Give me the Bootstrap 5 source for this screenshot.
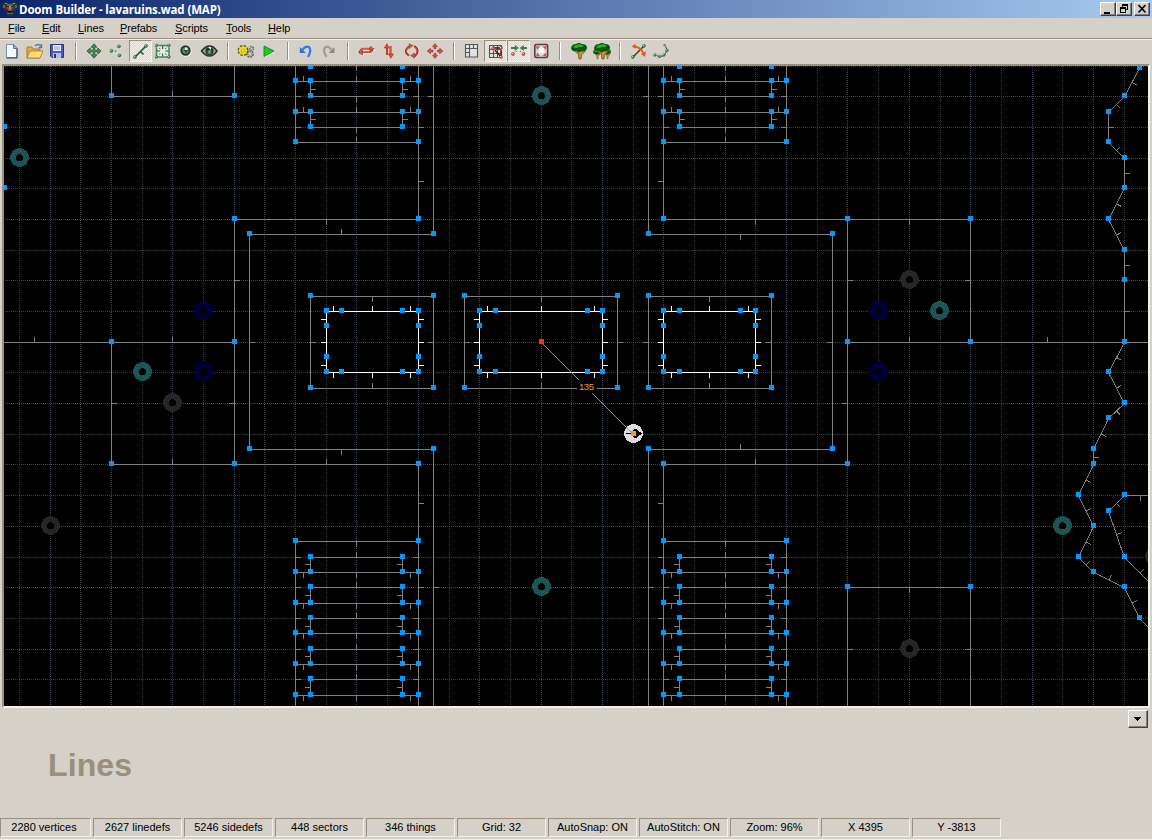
<!DOCTYPE html>
<html lang="en">
<head>
<meta charset="utf-8">
<title>Doom Builder - lavaruins.wad (MAP)</title>
<meta name="viewport" content="width=device-width, initial-scale=1">
<link href="https://cdn.jsdelivr.net/npm/bootstrap@5.3.0/dist/css/bootstrap.min.css" rel="stylesheet">
<style>
:root{--face:#d5d0c8;--shade:#988f7c;--lite:#f3f1ea}
body{width:1152px;height:840px;overflow:hidden;background:var(--face);color:#000;font:11px/14px "Liberation Sans",Arial,sans-serif;cursor:default}
svg{display:block;flex:none}
.titlebar{height:18px;background:linear-gradient(90deg,#0a246a,#a6caf0);color:#fff;font:bold 12px/17px "Open Sans","Noto Sans",sans-serif;padding:0 2px}
.caption{letter-spacing:-.13px;font-size:11.5px;margin-left:1px}
.capbtn{width:16px;height:14px;background:var(--face);border:1px solid;border-color:#fff #404040 #404040 #fff;box-shadow:inset -1px -1px #808080}
.capbtn.close-box{margin-left:2px}
.menubar{height:22px;padding:3px 0 0 8px;border-bottom:1px solid var(--lite);box-shadow:inset 0 -1px var(--shade);letter-spacing:-.1px}
.menubar span{display:inline-block;height:14px;white-space:nowrap}
.menubar u{text-underline-offset:1px}
.toolbar{height:24px}
.tool{width:23px;height:22px;padding:3px 0 0 4px;flex:none}
.tool.pressed{border:1px solid;border-color:var(--shade) var(--lite) var(--lite) var(--shade);padding:2px 0 0 3px;background:repeating-conic-gradient(#f1eee8 0 25%,#dcd8d0 0 50%) 0 0/2px 2px}
.gap{width:14px;flex:none;height:18px;margin-top:2px;background:linear-gradient(90deg,transparent 6px,var(--shade) 6px 7px,#fff 7px 8px,transparent 8px)}
.view{height:644px;border:2px solid;border-color:var(--shade) var(--lite) var(--lite) var(--shade);margin:0 2px;box-shadow:inset 1px 1px #404040}
.viewport{width:1144px;height:640px;background:#000}
.details{height:110px}
.mode{font:bold 32px/32px "Liberation Sans",Arial,sans-serif;color:var(--shade);padding:41px 0 0 48px;letter-spacing:.1px}
.drop{width:20px;height:18px;margin:2px 4px 0 0;border:1px solid;border-color:#fff #404040 #404040 #fff;box-shadow:inset -1px -1px #808080}
.status{height:22px;gap:2px;border-bottom:1px solid var(--lite);padding-bottom:2px}
.pane{width:89px;height:19px;flex:none;border:1px solid;border-color:var(--shade) var(--lite) var(--lite) var(--shade);line-height:16px;text-align:center;white-space:nowrap}
.pane:first-child{width:91px;padding-right:3px}
</style>
</head>
<body>
<div class="d-flex flex-column">
<header class="titlebar d-flex align-items-center">
 <svg width="16" height="16" viewBox="0 0 16 16"><path d="M1 2l3-1 2 1h4l2-1 3 1 1 3-2 4-2 1-1 4-2 1H7l-2-1-1-4-2-1-2-4z" fill="#26352d"/><path d="M1 4h2v3H1zM13 4h2v3h-2zM5 3h6v2H5zM6 8h4v2H6zM5 12h6v1H5z" fill="#55685c"/><path d="M3 2h2v1H3zM11 2h2v1h-2zM7 5h2v3H7z" fill="#8a9a8c"/><path d="M4 6h3v2H4zM9 6h3v2H9z" fill="#c81c1c"/><path d="M6 10h4v1H6z" fill="#000"/></svg>
 <span class="caption text-nowrap">Doom Builder - lavaruins.wad (MAP)</span>
 <div class="ms-auto d-flex">
  <div class="capbtn"><svg width="14" height="12"><path d="M3 9h6v2H3z"/></svg></div>
  <div class="capbtn"><svg width="14" height="12" shape-rendering="crispEdges"><path d="M5 1h6v2H5zM5 3h1v1H5zM10 3h1v4h-1zM8 6h2v1H8zM3 4h6v2H3zM3 6h1v4H3zM8 6h1v4H8zM3 9h6v1H3z"/></svg></div>
  <div class="capbtn close-box"><svg width="14" height="12"><path d="M3.500 2l7 7.500M10.500 2l-7 7.500" stroke="#000" stroke-width="1.700"/></svg></div>
 </div>
</header>
<nav class="menubar d-flex">
 <span style="width:34px"><u>F</u>ile</span><span style="width:36px"><u>E</u>dit</span><span style="width:42px"><u>L</u>ines</span><span style="width:55px"><u>P</u>refabs</span><span style="width:51px"><u>S</u>cripts</span><span style="width:42px"><u>T</u>ools</span><span><u>H</u>elp</span>
</nav>
<div class="toolbar d-flex" id="toolbar"></div>
<main class="view"><svg class="viewport" id="map" viewBox="4 66 1144 640" shape-rendering="crispEdges"></svg></main>
<section class="details d-flex justify-content-between align-items-start">
 <div class="mode">Lines</div>
 <div class="drop"><svg width="18" height="16" shape-rendering="crispEdges"><path d="M5 6h7v1H5zM6 7h5v1H6zM7 8h3v1H7zM8 9h1v1H8z"/></svg></div>
</section>
<footer class="status d-flex">
 <div class="pane">2280 vertices</div><div class="pane">2627 linedefs</div><div class="pane">5246 sidedefs</div><div class="pane">448 sectors</div><div class="pane">346 things</div><div class="pane">Grid: 32</div><div class="pane">AutoSnap: ON</div><div class="pane">AutoStitch: ON</div><div class="pane">Zoom: 96%</div><div class="pane">X 4395</div><div class="pane">Y -3813</div>
</footer>
</div>
<script src="https://cdn.jsdelivr.net/npm/bootstrap@5.3.0/dist/js/bootstrap.bundle.min.js"></script>
<script>
// ---------- toolbar icons, each on a 16 x 16 grid ----------
const ball=(x,y,c,r=1.7)=>`<circle cx="${x+.7}" cy="${y+.7}" r="${r}" fill="#fff9"/><circle cx="${x}" cy="${y}" r="${r}" fill="${c}" stroke="#0005" stroke-width=".6"/><circle cx="${x-.5}" cy="${y-.6}" r=".7" fill="#fff9"/>`;
const G='#3f8a4c',D='#24522e',R='#e0523c',K='#7c1d12';
const tree='<path d="M7 8l1 8h2l.500-4 4-4z" fill="#c79030" stroke="#6b4312" stroke-width=".7"/><path d="M7.500 11L4 8" stroke="#a87424" stroke-width="1.600"/><path d="M0 5q1-4 5-4 3-2 6 0 5 0 5 4-1 4-5 3-3 2-6 0-4 1-5-3z" fill="#07580c"/><path d="M2 4q2-2.500 5-2.500 3-1 6 1.500-2 2-5 1-3 2-6 0z" fill="#2cb02c"/>';
const icons={
 new:'<path d="M2.500 1.500h7l3.500 4v9H2.500z" fill="#f4f8ff" stroke="#7d92a8"/><path d="M9.500 1.500v4H13z" fill="#b8cbe4" stroke="#5b7186"/><path d="M13 5.500v9.500H2.500" stroke="#1e3c66" fill="none"/>',
 open:'<path d="M0 4h5l1 2h7v9H0z" fill="#e8ac34" stroke="#a06c14" stroke-width=".8"/><path d="M3 8h13l-3 7H0z" fill="#ffdc84" stroke="#b37c1c" stroke-width=".8"/><path d="M8 3q3-3 6 0M14.500 1v3.500h-3" fill="none" stroke="#587898" stroke-width="1.400"/>',
 save:'<path d="M.5 1.500h13v13H2l-1.500-1.500z" fill="#4c5cc0" stroke="#28347c"/><path d="M3 2h8v6H3z" fill="#e8f0ff"/><path d="M4 4h6M4 6h6" stroke="#8ca0d8"/><path d="M3 10h8v5H3z" fill="#b8c0d8"/><path d="M4 11h2v4H4z" fill="#28347c"/>',
 move:`<path d="M7 3v10M2 8h10" stroke="${D}" stroke-width="2.400"/><path d="M7 .8l3 3.400H4zM7 15.200l3-3.400H4zM-.2 8l3.400-3v6zM14.200 8l-3.400-3v6z" fill="${G}" stroke="${D}" stroke-width=".7"/><path d="M7 3v10M2 8h10" stroke="#6cae74" stroke-width=".8"/>`,
 verts:ball(1.500,8,G)+ball(9,3.500,G)+ball(9.500,12.500,G)+ball(5.500,8,G,.8),
 line:`<path d="M2 14L13 3M7.500 8.500l3 3" stroke="${D}" stroke-width="1.600"/>`+ball(2,14,G)+ball(13,3,G),
 sector:`<path d="M.5 2.500h12.500v11.500H.5z" fill="#e4e8de" stroke="${G}" stroke-width="1.500"/><path d="M6.700 3v3M6.700 13.500v-3M1 8h3M12.500 8h-3" stroke="${D}"/><path d="M3 5l1.500 1M10.500 5L9 6M3 11.500l1.500-1M10.500 11.500l-1.500-1" stroke="${G}"/>`+ball(.5,2.500,G,1.500)+ball(13,2.500,G,1.500)+ball(.5,14,G,1.500)+ball(13,14,G,1.500),
 thing:`<circle cx="6.800" cy="8" r="6" fill="#eceee8"/><circle cx="6.500" cy="7.500" r="4.200" fill="#5d9467" stroke="#22362a" stroke-width="2"/><path d="M6 8V4.500h2.500V8z" fill="#e6efe6"/><path d="M4.500 7h5l-2.500 3z" fill="${D}"/>`,
 eye:'<path d="M-.5 8q4-5 8-5t7.500 5q-3.500 5-7.500 5T-.5 8z" fill="#9aa69c" stroke="#27302a" stroke-width="1.500"/><circle cx="7.500" cy="8" r="4" fill="#20392a"/><circle cx="7.500" cy="9" r="2" fill="#54a060"/><path d="M6 4h3v3z" fill="#e8f4e8"/>',
 gears:'<circle cx="11" cy="11" r="2.500" fill="none" stroke="#555" stroke-width="2.600" stroke-dasharray="1.500 .7"/><circle cx="11" cy="11" r="2" fill="none" stroke="#bbb"/><circle cx="12.500" cy="5.500" r="1.800" fill="none" stroke="#777" stroke-width="2" stroke-dasharray="1.400 .7"/><circle cx="4" cy="7.500" r="3.500" fill="none" stroke="#5e5200" stroke-width="4" stroke-dasharray="1.800 .95"/><circle cx="4" cy="7.500" r="3" fill="none" stroke="#ecd80c" stroke-width="2.400"/>',
 play:'<path d="M3 4v10.500L13 9z" fill="#fff9"/><path d="M2 3v10.500L12 8z" fill="#1ec81e" stroke="#0a7a10" stroke-width=".8"/>',
 undo:'<path d="M.8 4v6h6z" fill="#2f70d8"/><path d="M3 7.500q3.500-5 7-3.500 3 3-1 10" fill="none" stroke="#3a7ae0" stroke-width="2.300"/>',
 redo:'<path d="M12.500 4v6h-6z" fill="#8e8a82"/><path d="M10 7.500Q6.500 2 3 4.500q-2.500 3 1.500 9.500" fill="none" stroke="#a09c94" stroke-width="2.300"/>',
 fliph:`<path d="M2 6.300h9V4l4 3-4 2.500M12 10H4v2L-.5 9 4 6.500" fill="none" stroke="#fff9" stroke-width="2"/><path d="M2 6h9M3 9.500h9M2 6L0 9M14 7l-2 2.500" stroke="${K}" stroke-width="1"/><path d="M2 5.500h9M3 9h9" stroke="${R}" stroke-width="1.300"/><path d="M11 3.200L15.200 6 11 8.500zM3.500 7L-.8 9.500l4.300 2.500z" fill="${R}" stroke="${K}" stroke-width=".5"/>`,
 flipv:`<path d="M5 3v9M8.500 3v9" stroke="${K}" stroke-width="1.800"/><path d="M5 3v9M8.500 3v9" stroke="${R}" stroke-width="1.100"/><path d="M2.200 5L5 .8 7 5zM6.500 11l2.300 4.200L11.500 11z" fill="${R}" stroke="${K}" stroke-width=".5"/>`,
 rotate:`<path d="M5 3Q-.500 6 1.500 10.500L4 12.500M9 3q5 3 3 7.500l-2.500 3" fill="none" stroke="${K}" stroke-width="1.900"/><path d="M4.500 3.500Q0 6 2 10.500L4 12M9 3.500q4.500 3 2.500 7L9.500 13" fill="none" stroke="${R}" stroke-width="1.100"/><path d="M4 .8v5L8 2.500zM9.500 10v5.200L5.500 12.500z" fill="${R}" stroke="${K}" stroke-width=".4"/>`,
 scale:`<path d="M7 .6l2.500 3H8v2H6v-2H4.500zM7 15.400l2.500-3H8v-2H6v2H4.500zM-.8 8l3.300-2.700V7H5v2H2.500v1.700zM15 8l-3.300-2.700V7H9.500v2h2.200v1.700z" fill="${R}" stroke="${K}" stroke-width=".5"/>`,
 grid:'<path d="M.5 1.500h12v12.500H.5z" fill="#dfe1e3"/><path d="M.5 1.500h12v12.500H.5zM4.500 1.500v12.500M8.500 1.500v4M.5 5.500h12M.5 9.500h4" fill="none" stroke="#53575c" stroke-width="1.100"/>',
 snap:`<path d="M1.500 2.500h12v12h-12zM5.500 2.500v12M9.500 2.500v12M1.500 6.500h12M1.500 10.500h12" fill="none" stroke="#53575c" stroke-width="1.100"/><path d="M5 5h8v9M5 5l8 9" fill="none" stroke="#3a1a16" stroke-width="1.300"/>${ball(5,5.500,R)+ball(13,5,R)+ball(13,14,R)}`,
 stitch:`<path d="M0 5h5M16 5h-5" stroke="${D}" stroke-width="1.300"/><path d="M4 2.500L7.500 5 4 7.500zM12.500 2.500L9 5l3.500 2.500z" fill="${G}" stroke="${D}" stroke-width=".4"/>`+ball(2,11,R)+ball(12.500,11,R)+ball(5,8.500,R,.6)+ball(9.500,8.500,R,.6),
 snapx:`<rect x=".8" y="1.500" width="12.800" height="13" rx="1.500" fill="#dcdcdc" stroke="#44474b" stroke-width="1.600"/><path d="M5 5l4.500 5M9.500 5L5 10" stroke="#fff" stroke-width="2"/><path d="M2 3l4 .5L3 7zM12.500 3l-4 .5L12 7zM2 13.500l4-.5L3 9.500zM12.500 13.500l-4-.5L12 9.500z" fill="${R}"/>`,
 tree:tree,
 trees:`<g transform="translate(-1 6) scale(.5 .62)">${tree}</g><g transform="translate(9 6) scale(.5 .62)">${tree}</g>${tree}`,
 curve:`<path d="M2 14L13 3" stroke="${D}" stroke-width="1.600"/><path d="M4 3.500q6 1 8.500 7" fill="none" stroke="#e8571e" stroke-width="1.800"/><path d="M4.500 .8v5L.8 3.500zM15 8.500l-1 5.500-4-3z" fill="#e8571e"/>`+ball(2,14,G)+ball(13,3,G),
 arc:`<path d="M1 12q5 3 8 1t4-6l-2-5" fill="none" stroke="${D}" stroke-width="1"/>`+ball(1,12,G,1.500)+ball(5.500,13.500,G,1.500)+ball(10,12,G,1.500)+ball(13,7.500,G,1.500)+ball(10.500,2,G,1.100)
};
const order='new open save | move verts *line sector thing eye | gears play | undo redo | fliph flipv rotate scale | grid *snap *stitch snapx | tree trees | curve arc';
document.getElementById('toolbar').innerHTML=order.split(' ').map(n=>{
 if(n==='|')return '<div class="gap"></div>';
 const on=n[0]==='*';
 return `<div class="tool${on?' pressed':''}"><svg width="16" height="16" overflow="visible" viewBox="0 0 16 16">${icons[on?n.slice(1):n]}</svg></div>`;
}).join('');

// ---------- map ----------
const out=[];
const gx=i=>Math.floor(19.35+30.69*i), gy=j=>Math.floor(66.02+30.69*j);
const tone=k=>k%2?'#3c4859':'#404040';
for(let i=0;i<37;i++)out.push(`<path d="M${gx(i)+.5} 66V706" stroke="${tone(i)}" stroke-dasharray="1 1"/>`);
for(let j=0;j<21;j++)out.push(`<path d="M5 ${gy(j)+.5}H1148" stroke="${tone(j)}" stroke-dasharray="1 1"/>`);

const grey='#808080';
// tick leaving a wall point in direction n/s/e/w
function tick(x,y,d,c=grey){
 const r={n:[x,y-5,1,5],s:[x,y+1,1,5],e:[x+1,y,5,1],w:[x-5,y,5,1]}[d];
 out.push(`<rect x="${r[0]}" y="${r[1]}" width="${r[2]}" height="${r[3]}" fill="${c}"/>`);
}
function ticks(str,c){str.split(' ').forEach(t=>{const [x,y,d]=t.split(',');tick(+x,+y,d,c)})}
function H(y,x1,x2,c=grey){out.push(`<rect x="${x1}" y="${y}" width="${x2-x1+1}" height="1" fill="${c}"/>`)}
function V(x,y1,y2,c=grey){out.push(`<rect x="${x}" y="${y1}" width="1" height="${y2-y1+1}" fill="${c}"/>`)}
function box(x1,y1,x2,y2,c){H(y1,x1,x2,c);H(y2,x1,x2,c);V(x1,y1,y2,c);V(x2,y1,y2,c)}
const pts=[];
const P=(x,y)=>pts.push([x,y]);

// outer rooms
H(96,111,234);V(111,66,96);V(234,66,96);H(342,4,234);V(111,342,464);H(464,111,418);V(234,219,464);H(219,234,418);
H(234,249,433);H(449,249,433);V(249,234,449);V(433,66,234);V(433,449,706);V(418,66,219);V(418,464,706);
V(295,66,142);V(295,541,706);
V(648,66,234);V(663,66,219);V(786,66,142);H(234,648,832);H(449,648,832);V(832,234,449);H(219,663,970);V(847,219,464);V(970,219,342);
H(342,847,1148);H(464,663,847);V(663,464,706);V(648,449,706);V(786,541,706);H(587,847,970);V(847,587,706);V(970,587,706);
ticks('172,96,n 34,342,n 172,342,n 172,464,n 111,403,e 234,403,w 234,280,e 326,219,s 341,234,n 249,342,e 341,449,s 326,464,n 433,96,w 418,181,e 418,503,e 433,587,e 418,587,e 648,96,w 663,96,w 663,181,w 648,587,e 755,219,s 740,234,s 909,219,s 847,280,e 970,280,w 832,342,w 909,342,n 1047,342,n 847,403,w 740,449,n 755,464,n 663,503,w 909,587,s 847,649,e 970,649,w');
[[111,96],[234,96],[4,127],[4,188],[234,219],[234,342],[111,342],[111,464],[234,464],[249,234],[249,449],[433,234],[433,449],[418,219],[418,464],
 [648,234],[648,449],[663,219],[663,464],[832,234],[832,449],[847,219],[970,219],[847,342],[970,342],[847,464],[847,587],[970,587]].forEach(p=>P(...p));

// staircases
[[295,310,402,418,303,356,410],[663,679,771,786,671,725,778]].forEach(([a,b,c,d,l,m,r])=>{
 P(b,67);P(c,67);tick(m,65,'s');
 [[81,96],[112,127]].forEach(([y1,y2])=>{
  H(y1,a,d);H(y2,b,c);V(b,y1,y2);V(c,y1,y2);
  [l,m,r].forEach(x=>tick(x,y1,'n'));tick(m,y2,'s');
  const h=y1===81?89:119;tick(b,h,'e');tick(c,h,'e');
  [a,b,c,d].forEach(x=>P(x,y1));P(b,y2);P(c,y2);
 });
 H(142,a,d);tick(m,142,'n');P(a,142);P(d,142);
 H(541,a,d);tick(m,541,'s');P(a,541);P(d,541);
 [[557,572,564],[587,603,595],[618,633,626],[649,664,656],[679,695,687]].forEach(([y1,y2,h])=>{
  H(y1,b,c);H(y2,a,d);V(b,y1,y2);V(c,y1,y2);
  tick(m,y1,'n');[l,m,r].forEach(x=>tick(x,y2,'s'));tick(b,h,'w');tick(c,h,'w');
  P(b,y1);P(c,y1);[a,b,c,d].forEach(x=>P(x,y2));
 });
});
ticks('295,96,e 295,127,e 418,96,w 418,127,e 663,127,e 786,96,w 786,127,w');
ticks('295,557,e 295,587,e 295,618,e 295,649,e 295,679,e 418,557,w 418,618,w 418,649,w 418,679,w');
ticks('663,557,w 663,587,e 663,618,w 663,679,e 786,557,w 786,587,w 786,618,w 786,649,w 786,679,w');

// three pillars
[[310,433,326,341,402,418,333,372,410,'e','w'],[464,617,479,495,587,602,487,541,594,'e','e'],[648,771,663,679,740,755,671,709,748,'w','w']].forEach(([o1,o2,a,b,c,d,l,m,r,dl,dr])=>{
 box(o1,296,o2,388,grey);tick(m,296,'s');tick(m,388,'n');tick(o1,342,dl);tick(o2,342,dr);
 box(a,311,d,372,'#fff');
 [l,m,r].forEach(x=>{tick(x,311,'n','#fff');tick(x,372,'s','#fff')});
 [319,342,365].forEach(y=>{tick(a,y,'w','#fff');tick(d,y,'e','#fff')});
 P(o1,296);P(o2,296);P(o1,388);P(o2,388);
 [a,b,c,d].forEach(x=>{P(x,311);P(x,372)});
 [326,357].forEach(y=>{P(a,y);P(d,y)});
});

// eastern cliffs: ticks point to the left-hand side of each wall
function chain(list,hide){
 list.forEach(([x,y],i)=>{
  if(!hide.includes(i))P(x,y);
  if(!i)return;
  const [px,py]=list[i-1],dx=x-px,dy=y-py,n=Math.hypot(dx,dy),mx=(x+px)/2+.5,my=(y+py)/2+.5;
  out.push(`<path d="M${px+.5} ${py+.5}L${x+.5} ${y+.5}M${mx} ${my}l${(dy/n*5.5).toFixed(2)} ${(-dx/n*5.5).toFixed(2)}" stroke="${grey}" fill="none"/>`);
 });
}
chain([[1139,68],[1124,96],[1108,112],[1108,142],[1124,158],[1124,188],[1108,219],[1124,250],[1124,280],[1124,342],[1108,372],[1124,403],[1108,418],[1093,449],[1093,464],[1078,495],[1093,526],[1078,557],[1093,572],[1124,587],[1139,618],[1155,634]],[21]);
chain([[1155,495],[1124,495],[1108,511],[1124,557],[1155,588]],[0,4]);

// things
const ring=(x,y,c)=>out.push(`<circle cx="${x+.5}" cy="${y+.5}" r="6.500" fill="#000" stroke="${c}" stroke-width="6"/>`);
[[541,95],[19,157],[142,371],[939,310],[1062,525],[541,586]].forEach(p=>ring(...p,'#1c5555'));
[[203,310],[203,371],[878,310],[878,371]].forEach(p=>ring(...p,'#000038'));
[[172,402],[50,525],[909,279],[909,648],[1154,556]].forEach(p=>ring(...p,'#262626'));
pts.forEach(([x,y])=>out.push(`<rect x="${x-2}" y="${y-3}" width="5" height="5" fill="#0099ff"/>`));

// player start and measuring line
out.push('<circle cx="633.5" cy="433.5" r="9.500" fill="#dcdcdc"/><path d="M626 433h7v-3h1v-1h3v1h1v1h1v1h2v1h1v1h-1v1h-2v1h-1v1h-1v1h-3v-1h-1v-3h-7z" fill="#000"/><path d="M631 431h5v5h-5z" fill="#e8a020"/>');
out.push('<path d="M541.5 342.5L633 434" stroke="#c89030"/><rect x="577" y="380" width="20" height="13" fill="#000"/><rect x="539" y="339" width="5" height="5" fill="#ff3010"/>');
out.push('<text x="579" y="390" font-family="Liberation Sans, sans-serif" font-size="9.500" textLength="15" fill="#e8a020">135</text>');
document.getElementById('map').innerHTML=out.join('');
</script>
</body>
</html>
